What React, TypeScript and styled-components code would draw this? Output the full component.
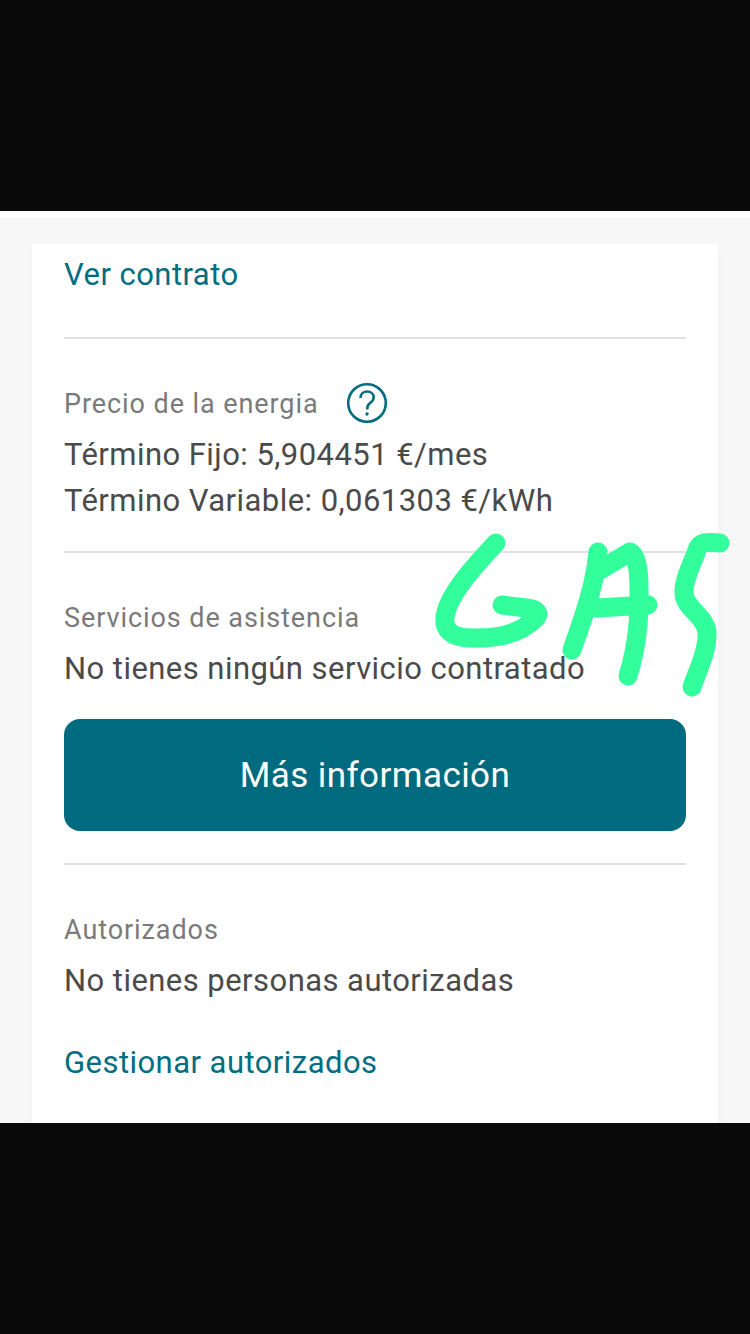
import styled, { createGlobalStyle } from 'styled-components'

const GlobalStyle = createGlobalStyle`
  html, body {
    margin: 0;
    padding: 0;
    background: #0a0a0a;
  }
`

const Page = styled.div`
  position: relative;
  width: 750px;
  height: 1334px;
  display: flex;
  flex-direction: column;
  font-family: Roboto, 'Liberation Sans', sans-serif;
  overflow: hidden;
`

const BlackBar = styled.div<{ $height: number }>`
  height: ${(p) => p.$height}px;
  flex: none;
  background: #0a0a0a;
`

const Screen = styled.div`
  height: 912px;
  flex: none;
  box-sizing: border-box;
  padding-top: 7px;
  background: #fff;
  display: flex;
`

const Backdrop = styled.div`
  flex: 1;
  box-sizing: border-box;
  padding: 26px 32px 0;
  background: #f7f7f7;
  display: flex;
`

const Card = styled.div`
  flex: 1;
  box-sizing: border-box;
  padding: 0 32px;
  background: #fff;
  box-shadow: 0 6px 8px rgba(0, 0, 0, 0.03);
  display: flex;
  flex-direction: column;
`

const LinkText = styled.div<{ $top: number }>`
  margin-top: ${(p) => p.$top}px;
  color: #006e80;
  font-size: 31px;
  line-height: 40px;
  letter-spacing: 0.45px;
`

const Divider = styled.div<{ $top: number }>`
  margin-top: ${(p) => p.$top}px;
  height: 2px;
  background: #e2e2e2;
`

const LabelRow = styled.div<{ $top: number }>`
  margin-top: ${(p) => p.$top}px;
  display: flex;
  align-items: center;
  gap: 27px;
  height: 40px;
`

const Label = styled.div`
  padding-top: 2px;
  color: #7a7a7a;
  font-size: 27px;
  line-height: 40px;
  letter-spacing: 0.92px;
`

const Value = styled.div<{ $top?: number }>`
  margin-top: ${(p) => p.$top ?? 0}px;
  color: #4a4a4a;
  font-size: 31px;
  line-height: 40px;
  letter-spacing: 0.45px;
  white-space: nowrap;
`

const InfoButton = styled.button`
  margin-top: 30px;
  height: 112px;
  border: 0;
  border-radius: 16px;
  background: #006a7f;
  color: #fff;
  font-family: inherit;
  font-size: 35px;
  letter-spacing: 0.43px;
`

const Scribble = styled.svg`
  position: absolute;
  inset: 0;
  width: 750px;
  height: 1334px;
  pointer-events: none;
`

const HelpIcon = () => (
  <svg width="42" height="42" viewBox="0 0 42 42" fill="none" stroke="#006e80">
    <circle cx="21" cy="21" r="18.8" strokeWidth="2.6" />
    <path d="M14.5 16c0-4 3-6.5 6.7-6.5s6.5 2.4 6.5 5.8c0 3-1.8 4.3-3.6 5.7-1.7 1.3-2.8 2.5-2.8 5.3v1.2" strokeWidth="2.6" />
    <circle cx="21" cy="32" r="1.7" fill="#006e80" stroke="none" />
  </svg>
)

const App = () => {
  return (
    <>
      <GlobalStyle />
      <Page>
        <BlackBar $height={211} />
        <Screen>
          <Backdrop>
            <Card>
              <LinkText $top={11}>Ver contrato</LinkText>
              <Divider $top={42} />
              <LabelRow $top={44}>
                <Label>Precio de la energia</Label>
                <HelpIcon />
              </LabelRow>
              <Value $top={12}>Término Fijo: 5,904451 €/mes</Value>
              <Value $top={6}>Término Variable: 0,061303 €/kWh</Value>
              <Divider $top={30} />
              <LabelRow $top={44}>
                <Label>Servicios de asistencia</Label>
              </LabelRow>
              <Value $top={12}>No tienes ningún servicio contratado</Value>
              <InfoButton>Más información</InfoButton>
              <Divider $top={32} />
              <LabelRow $top={44}>
                <Label>Autorizados</Label>
              </LabelRow>
              <Value $top={12}>No tienes personas autorizadas</Value>
              <LinkText $top={42}>Gestionar autorizados</LinkText>
            </Card>
          </Backdrop>
        </Screen>
        <BlackBar $height={211} />
        <Scribble viewBox="0 0 750 1334" fill="none" stroke="#32fe9c" strokeWidth="19" strokeLinecap="round" strokeLinejoin="round">
          <path d="M496 543C478 562 452 590 446 612C441 630 452 638 472 638C498 639 521 633 536 618C541 612 535 609 526 608L502 605" />
          <path d="M598 552C596 575 590 597 583 618L572 650" />
          <path d="M600 570L630 552C637 555 639 570 639 590C640 625 636 650 628 676" />
          <path d="M597 608L648 605" />
          <path d="M720 543C708 542 700 541 697 550C692 565 683 580 684 594C686 610 705 615 707 632C708 650 698 670 692 687" />
        </Scribble>
      </Page>
    </>
  )
}

export default App
